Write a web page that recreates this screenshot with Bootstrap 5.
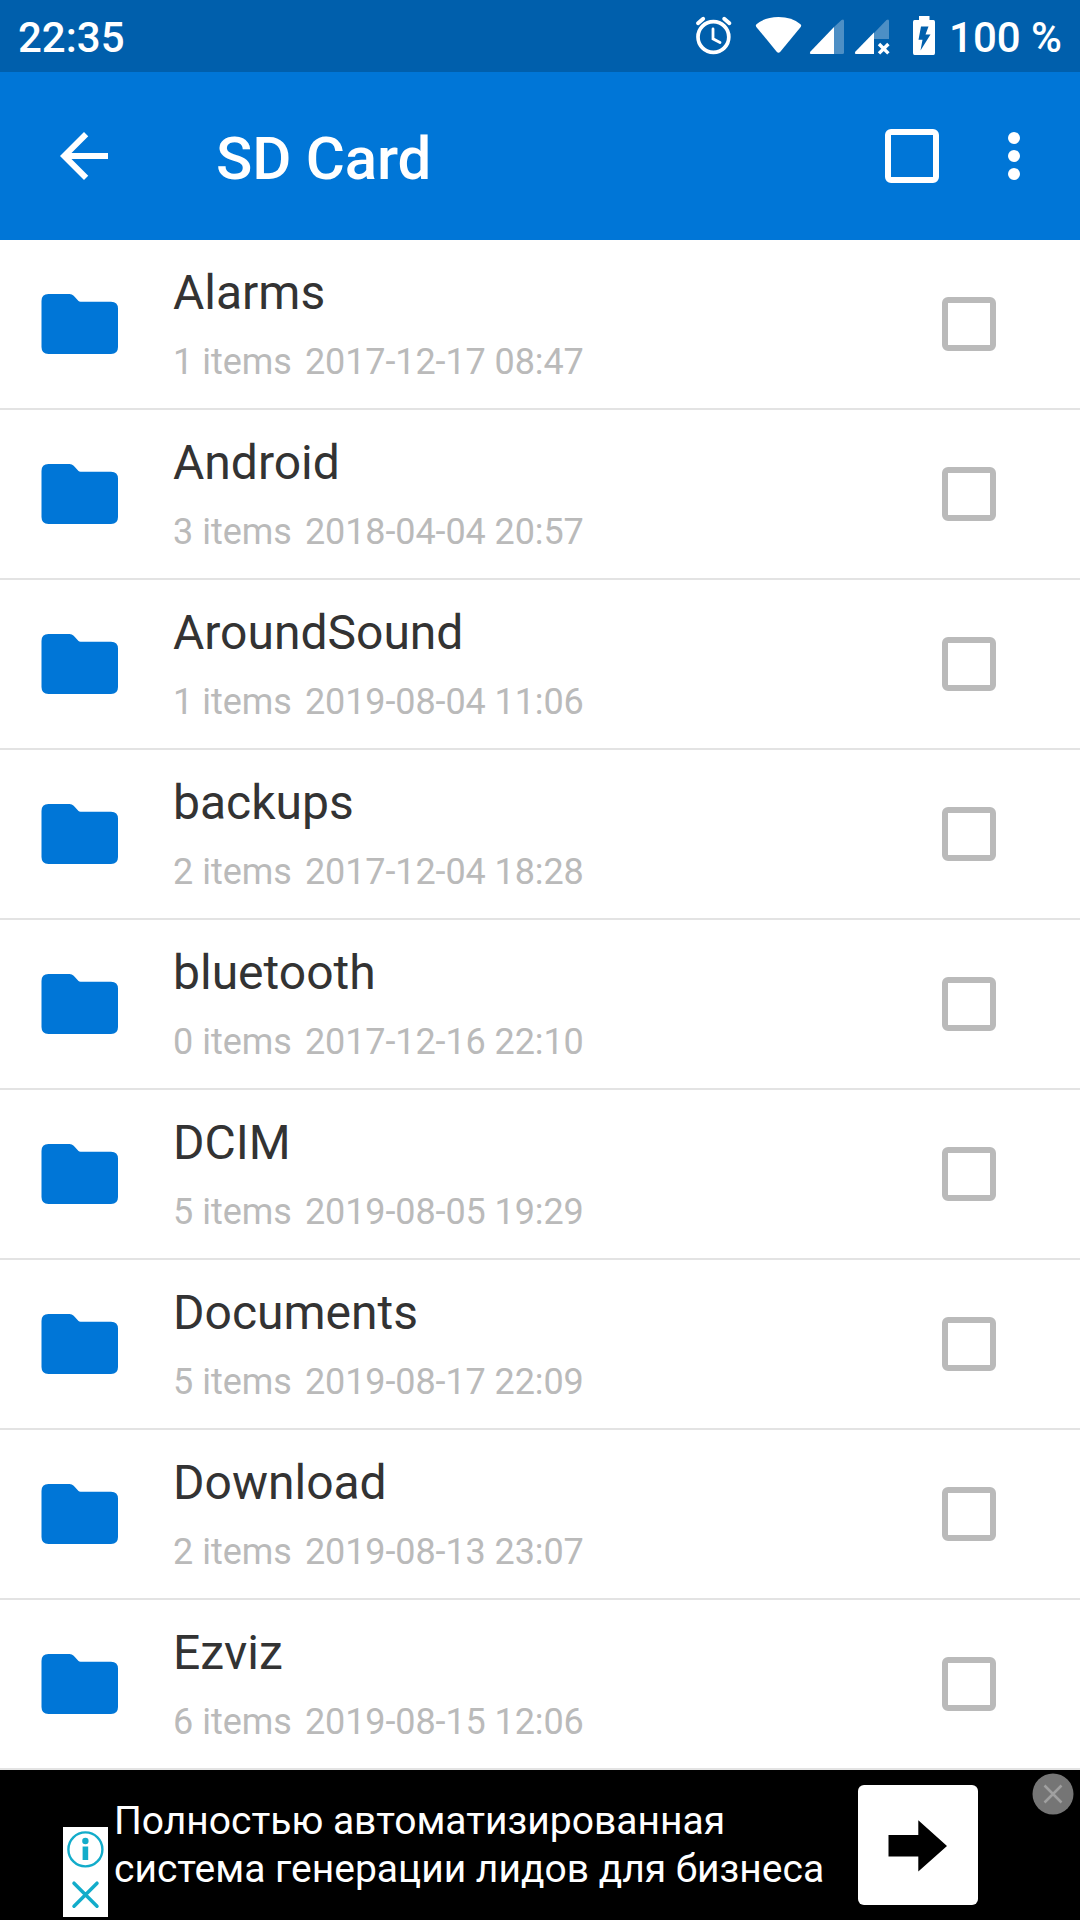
<!DOCTYPE html>
<html lang="en">
<head>
<meta charset="utf-8">
<meta name="viewport" content="width=device-width, initial-scale=1">
<title>SD Card</title>
<link href="https://cdn.jsdelivr.net/npm/bootstrap@5.3.0/dist/css/bootstrap.min.css" rel="stylesheet">
<style>
  body { font-family: Roboto, "Noto Sans", sans-serif; width: 1080px; height: 1920px; overflow: hidden; background: #fff; }
  svg { display: block; flex: none; }
  .status-strip { height: 72px; background: #005fac; font-size: 42px; font-weight: 500; padding: 2px 18px 0 18px; }
  .status-strip svg { margin-top: -2px; }
  .clock-text, .power-text { line-height: 66px; padding-top: 2px; }
  .power-text { margin-left: 13px; }
  .wifi-icon { margin-left: 22px; }
  .sim1-icon { margin-left: 7px; }
  .sim2-icon { margin-left: 9px; }
  .batt-icon { margin-left: 22px; }
  .app-head { height: 168px; background: #0076d7; padding: 0 54px 0 48px; }
  .app-title { font-size: 60px; font-weight: 500; line-height: 72px; letter-spacing: -.2px; margin: 5px 0 0 96px; }
  .tick-box { width: 54px; height: 54px; border: 6px solid #bababa; border-radius: 6px; flex: none; }
  .tick-box.on-head { border-color: #fff; margin-right: 63px; }
  #files .file-row { height: 170px; border: 0; border-bottom: 2px solid #e3e3e3; padding: 0 84px 0 41px; }
  .file-text { margin-left: 54px; padding-bottom: 1px; }
  .file-name { font-size: 48px; line-height: 56px; color: #333; }
  .file-meta { font-size: 36px; line-height: 42px; color: #bababa; margin-top: 20px; gap: 13px; }
  .file-date { letter-spacing: -.1px; }
  .ad-bar { height: 150px; background: #000; padding-left: 63px; }
  .ad-info { margin-top: 57px; }
  .ad-copy { font-size: 39px; line-height: 48px; margin: 27px 0 0 6px; width: 744px; }
  .ad-go { width: 120px; height: 120px; border-radius: 6px; margin-top: 15px; }
  .ad-close { margin: 3px 6px 0 0; }
</style>
</head>
<body>
<div class="d-flex flex-column text-white">
  <div class="status-strip d-flex align-items-center">
    <span class="clock-text me-auto">22:35</span>
    <svg width="38" height="40" viewBox="695 17 38 40" fill="none" stroke="#fff" stroke-linecap="round">
      <circle cx="713.4" cy="38" r="15.4" stroke-width="3.7"/>
      <path d="M698 24.300l5.200-4.500M729.400 24.300l-5.200-4.500" stroke-width="3.900"/>
      <path d="M713 30v9.800l7 3.800" stroke-width="2.800"/>
    </svg>
    <svg class="wifi-icon" width="47" height="40" viewBox="755 16 47 40" fill="#fff">
      <path d="M756.500 24.200Q765 17 778.500 17T800.500 24.200Q801.800 25.400 800.700 26.900L780.300 51.800Q778.500 53.900 776.700 51.800L756.300 26.900Q755.200 25.400 756.500 24.200Z"/>
    </svg>
    <svg class="sim1-icon" width="36" height="40" viewBox="809 16 36 40">
      <path d="M834 27L841.500 20Q844 18.500 844 21V52.500Q844 54 842.500 54H834Z" fill="#4d8fc5"/>
      <path d="M834 27V54H811Q809 53.500 810.500 51.500Z" fill="#fff"/>
    </svg>
    <svg class="sim2-icon" width="36" height="40" viewBox="854 16 36 40">
      <path d="M874 33L886.500 20Q889 18.500 889 21V39H874Z" fill="#4d8fc5"/>
      <path d="M874 32.500V54H856Q854 53.500 855.500 51.500Z" fill="#fff"/>
      <path d="M879 44l9.400 9.400M888.400 44l-9.400 9.400" stroke="#fff" stroke-width="3.400"/>
    </svg>
    <svg class="batt-icon" width="24" height="40" viewBox="912 16 24 40">
      <path d="M919 16H929.500V20H933.500Q935 20 935 22V53Q935 55 933.500 55H914.500Q913 55 913 53V22Q913 20 914.500 20H919Z" fill="#fff"/>
      <path d="M921 26.500H928.500L925.500 34.500H930.500L920.500 50.500L922.500 39.800H918.500Z" fill="#005fac"/>
    </svg>
    <span class="power-text">100 %</span>
  </div>

  <header class="app-head d-flex align-items-center">
    <svg width="72" height="72" viewBox="0 0 24 24" fill="#fff"><path d="M20 11H7.830l5.590-5.590L12 4l-8 8 8 8 1.410-1.410L7.830 13H20v-2z"/></svg>
    <h1 class="app-title me-auto">SD Card</h1>
    <span class="tick-box on-head"></span>
    <svg width="24" height="54" viewBox="0 0 24 54" fill="#fff"><circle cx="12" cy="9" r="6"/><circle cx="12" cy="27" r="6"/><circle cx="12" cy="45" r="6"/></svg>
  </header>
</div>

<svg width="0" height="0" class="position-absolute"><symbol id="folder" viewBox="0 0 78 60"><path d="M7.500 0H28.500Q31 0 32.700 1.800L37.500 7Q38.300 7.700 39.500 7.700H70Q77 7.700 77 14.700V53Q77 60 70 60H7.500Q.5 60 .5 53V7Q.5 0 7.500 0Z" fill="#0076d7"/></symbol></svg>

<main class="list-group list-group-flush" id="files"></main>

<footer class="ad-bar d-flex align-items-start text-white">
  <svg class="ad-info" width="45" height="90" viewBox="0 0 45 90" fill="none" stroke="#12acca">
    <path d="M0 0H45V90H0Z" fill="#fff" stroke="none"/>
    <circle cx="22.400" cy="22.400" r="17" stroke-width="2.400"/>
    <circle cx="22.400" cy="14" r="3.200" fill="#12acca" stroke="none"/>
    <path d="M22.400 19.500V33" stroke-width="5.600"/>
    <path d="M11 56.200l23 23M34 56.200l-23 23" stroke-width="3.500" stroke-linecap="round"/>
  </svg>
  <div class="ad-copy text-nowrap">Полностью автоматизированная<br>система генерации лидов для бизнеса</div>
  <div class="ad-go bg-white me-auto">
    <svg width="120" height="120" viewBox="0 0 120 120"><path d="M30.500 50H60.300V35.300L89 61L60.300 86.500V71.500H30.500Z"/></svg>
  </div>
  <svg class="ad-close" width="42" height="42" viewBox="0 0 42 42"><circle cx="21" cy="21" r="20.500" fill="#757575"/><path d="M12.500 12.500l17 17M29.500 12.500l-17 17" stroke="#a0a0a0" stroke-width="2.500"/></svg>
</footer>

<script src="https://cdn.jsdelivr.net/npm/bootstrap@5.3.0/dist/js/bootstrap.bundle.min.js"></script>
<script>
  const files = [
    ["Alarms", 1, "2017-12-17 08:47"],
    ["Android", 3, "2018-04-04 20:57"],
    ["AroundSound", 1, "2019-08-04 11:06"],
    ["backups", 2, "2017-12-04 18:28"],
    ["bluetooth", 0, "2017-12-16 22:10"],
    ["DCIM", 5, "2019-08-05 19:29"],
    ["Documents", 5, "2019-08-17 22:09"],
    ["Download", 2, "2019-08-13 23:07"],
    ["Ezviz", 6, "2019-08-15 12:06"]
  ];
  document.getElementById("files").innerHTML = files.map(([name, count, date]) => `
    <div class="list-group-item file-row d-flex align-items-center">
      <svg width="78" height="60"><use href="#folder"/></svg>
      <div class="file-text me-auto">
        <div class="file-name">${name}</div>
        <div class="file-meta d-flex"><span>${count} items</span><span class="file-date">${date}</span></div>
      </div>
      <span class="tick-box"></span>
    </div>`).join("");
</script>
</body>
</html>
